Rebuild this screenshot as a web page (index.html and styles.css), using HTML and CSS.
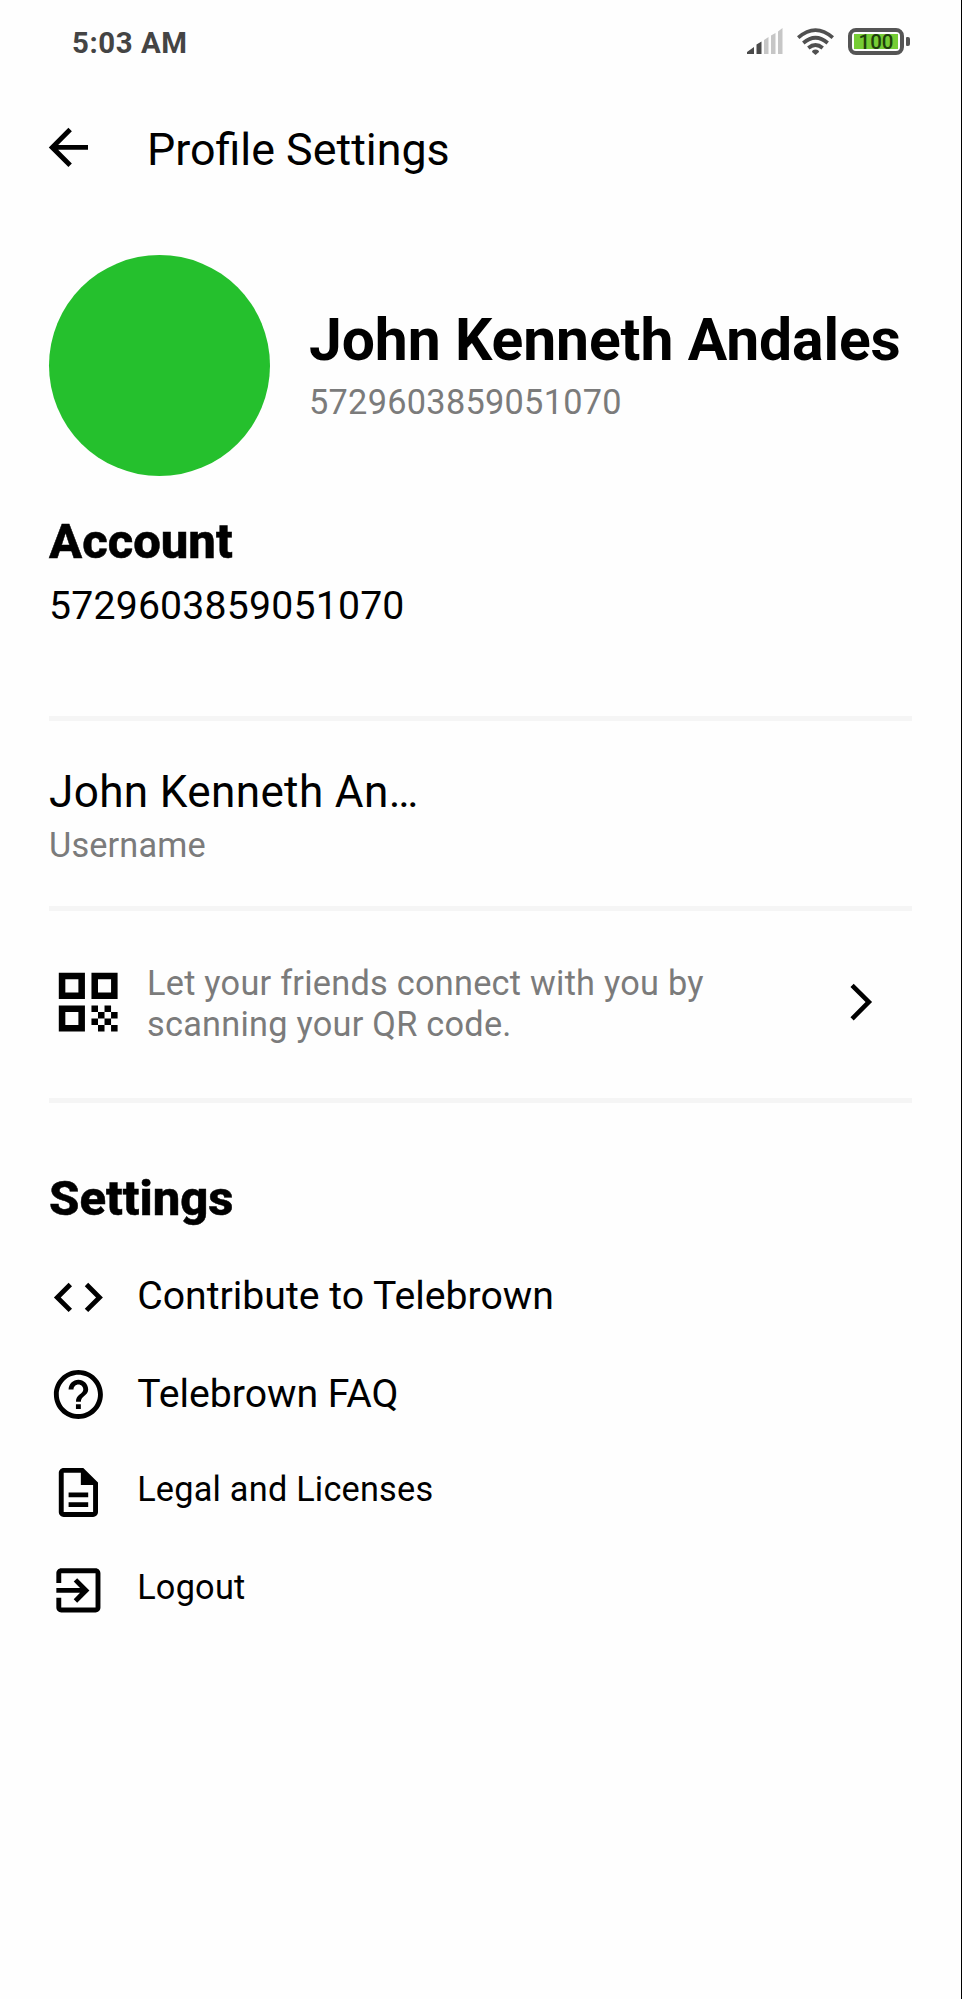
FILE: index.html
```html
<!DOCTYPE html>
<html lang="en">
<head>
<meta charset="utf-8">
<title>Profile Settings</title>
<link rel="stylesheet" href="styles.css">
</head>
<body>
<main class="screen">
  <header class="status">
    <span class="status-time">5:03 AM</span>
    <div class="status-icons">
      <svg class="signal" viewBox="0 0 36 27">
        <path fill="#4a4a4a" d="M0 26v-2l7-5v7zM9.500 26V16.500l5-3V26z"/>
        <path fill="#c6c6c6" d="M17 26V12l4.500-3v17zM24 26V7.500L28.500 5v21zM31 26V3.500L35.500 0v26z"/>
      </svg>
      <svg class="wifi" viewBox="0 0 37 27" fill="none" stroke="#505050" stroke-width="3.700">
        <path d="M1.200 9.600Q18.500-5.500 35.800 9.600M6.300 15Q18.500 4.500 30.700 15M11.300 20Q18.500 14 25.700 20"/>
        <path fill="#505050" stroke="none" d="M15 24a3.500 2.500 0 0 1 7 0l-3.500 3z"/>
      </svg>
      <div class="battery"><span class="battery-level">100</span></div>
    </div>
  </header>

  <nav class="appbar">
    <svg class="icon appbar-back" viewBox="0 0 24 24"><path d="M20 11H7.830l5.590-5.590L12 4l-8 8 8 8 1.410-1.410L7.830 13H20v-2z"/></svg>
    <h1 class="appbar-title">Profile Settings</h1>
  </nav>

  <section class="profile">
    <div class="avatar"></div>
    <div class="profile-text">
      <div class="profile-name">John Kenneth Andales</div>
      <div class="profile-id">5729603859051070</div>
    </div>
  </section>

  <section class="account">
    <h2 class="heading">Account</h2>
    <div class="account-id">5729603859051070</div>
  </section>

  <section class="username">
    <div class="username-value">John Kenneth An…</div>
    <div class="username-label">Username</div>
  </section>

  <section class="qr">
    <svg class="qr-icon" viewBox="0 0 24 24"><path fill-rule="evenodd" d="M3 11h8V3H3v8zm2-6h4v4H5V5zM3 21h8v-8H3v8zm2-6h4v4H5v-4zM13 3v8h8V3h-8zm6 6h-4V5h4v4zM19 19h2v2h-2zM13 13h2v2h-2zM15 15h2v2h-2zM13 17h2v2h-2zM15 19h2v2h-2zM17 17h2v2h-2zM17 13h2v2h-2zM19 15h2v2h-2z"/></svg>
    <p class="qr-text">Let your friends connect with you by<br>scanning your QR code.</p>
    <svg class="chevron" viewBox="0 0 24 24"><path d="M6.230 20.230L8 22l10-10L8 2 6.230 3.770 14.460 12z"/></svg>
  </section>

  <section class="settings">
    <h2 class="heading">Settings</h2>
    <ul class="menu">
      <li class="menu-item">
        <svg class="icon" viewBox="0 0 24 24"><path d="M9.400 16.600L4.800 12l4.600-4.600L8 6l-6 6 6 6 1.400-1.400zm5.200 0l4.600-4.600-4.600-4.600L16 6l6 6-6 6-1.400-1.400z"/></svg>
        <span class="menu-label">Contribute to Telebrown</span>
      </li>
      <li class="menu-item">
        <svg class="icon" viewBox="0 0 24 24"><path d="M11 18h2v-2h-2v2zm1-16C6.480 2 2 6.480 2 12s4.480 10 10 10 10-4.480 10-10S17.520 2 12 2zm0 18c-4.410 0-8-3.590-8-8s3.590-8 8-8 8 3.590 8 8-3.590 8-8 8zm0-14c-2.210 0-4 1.790-4 4h2c0-1.100.9-2 2-2s2 .9 2 2c0 2-3 1.750-3 5h2c0-2.250 3-2.500 3-5 0-2.210-1.790-4-4-4z"/></svg>
        <span class="menu-label">Telebrown FAQ</span>
      </li>
      <li class="menu-item">
        <svg class="icon" viewBox="0 0 24 24"><path d="M8 16h8v2H8zm0-4h8v2H8zm6-10H6c-1.100 0-2 .9-2 2v16c0 1.100.89 2 1.990 2H18c1.100 0 2-.9 2-2V8l-6-6zm4 18H6V4h7v5h5v11z"/></svg>
        <span class="menu-label menu-label-small">Legal and Licenses</span>
      </li>
      <li class="menu-item">
        <svg class="icon" viewBox="0 0 24 24"><path d="M10.090 15.590L11.500 17l5-5-5-5-1.410 1.410L12.670 11H3v2h9.670l-2.580 2.590zM19 3H5c-1.110 0-2 .9-2 2v4h2V5h14v14H5v-4H3v4c0 1.100.89 2 2 2h14c1.100 0 2-.9 2-2V5c0-1.100-.9-2-2-2z"/></svg>
        <span class="menu-label menu-label-small">Logout</span>
      </li>
    </ul>
  </section>
</main>
</body>
</html>
```
FILE: styles.css
```css
* { box-sizing: border-box; margin: 0; padding: 0; }

body {
  background: #fefefe;
  color: #000;
  font-family: Roboto, "Liberation Sans", sans-serif;
}

svg { display: block; flex: none; }

.screen {
  width: 962px;
  height: 1999px;
  padding: 0 49px;
  border-right: 1px solid #000;
  overflow: hidden;
}

.status {
  display: flex;
  align-items: center;
  justify-content: space-between;
  height: 87px;
  padding: 0 3px 0 23px;
}
.status-time {
  padding-bottom: 1px;
  font-size: 29.4px;
  font-weight: 700;
  line-height: 34px;
  letter-spacing: 0.55px;
  color: #444;
}
.status-icons { display: flex; align-items: center; padding-bottom: 4px; }
.signal { width: 36px; height: 27px; margin-right: 14px; }
.wifi { width: 37px; height: 27px; margin-right: 14px; }
.battery {
  position: relative;
  width: 56px;
  height: 27px;
  margin-right: 5px;
  padding: 2px;
  border: 4px solid #555;
  border-radius: 8px;
}
.battery::after {
  content: "";
  position: absolute;
  right: -10px;
  top: 5px;
  width: 4px;
  height: 9px;
  border-radius: 1px 2px 2px 1px;
  background: #555;
}
.battery-level {
  display: block;
  height: 15px;
  background: #76cd35;
  color: #20400c;
  font-size: 20.5px;
  font-weight: 500;
  line-height: 17px;
  text-align: center;
}

.icon { width: 58.8px; height: 58.8px; }

.appbar { display: flex; align-items: center; height: 122px; margin-left: -10px; }
.appbar-back { margin-bottom: 1px; }
.appbar-title {
  padding: 3px 0 0 49.200px;
  font-size: 44.8px;
  font-weight: 400;
  line-height: 52px;
}

.profile { display: flex; gap: 39px; margin-top: 46px; height: 221px; }
.avatar { flex: none; width: 221px; height: 221px; border-radius: 50%; background: #25c02d; }
.profile-text { padding-top: 50px; white-space: nowrap; }
.profile-name { font-size: 58.8px; font-weight: 700; line-height: 69px; letter-spacing: -0.1px; }
.profile-id {
  margin-top: 8px;
  font-size: 34.3px;
  line-height: 40px;
  letter-spacing: 0.28px;
  color: #7b7b7b;
}

.heading {
  font-size: 49px;
  font-weight: 800;
  line-height: 58px;
  -webkit-text-stroke: 0.5px #000;
}
.account { height: 245px; padding-top: 37px; border-bottom: 5px solid #f5f5f5; }
.account-id { margin-top: 12px; font-size: 39.2px; line-height: 46px; letter-spacing: 0.2px; }

.username { height: 190px; padding-top: 45px; border-bottom: 5px solid #f5f5f5; }
.username-value { font-size: 44.1px; line-height: 52px; letter-spacing: 0.35px; }
.username-label {
  margin-top: 7px;
  font-size: 34.3px;
  line-height: 40px;
  letter-spacing: 0.15px;
  color: #7b7b7b;
}

.qr {
  display: flex;
  align-items: flex-start;
  height: 192px;
  padding-top: 52px;
  border-bottom: 5px solid #f5f5f5;
}
.qr-icon { width: 78.4px; height: 78.4px; margin-right: 19.600px; }
.qr-text {
  flex: 1;
  font-size: 34.3px;
  line-height: 40.700px;
  letter-spacing: 0.25px;
  color: #7b7b7b;
  white-space: nowrap;
}
.chevron { width: 44.1px; height: 44.1px; margin: 17px 29px 0 0; }

.settings { padding-top: 67px; }
.menu { list-style: none; margin-top: 20px; }
.menu-item { display: flex; align-items: center; gap: 29.400px; height: 97.900px; }
.menu-label { padding-bottom: 1px; font-size: 39.2px; line-height: 46px; }
.menu-label-small { padding-bottom: 7px; font-size: 34.3px; line-height: 40px; letter-spacing: 0.21px; }
```
